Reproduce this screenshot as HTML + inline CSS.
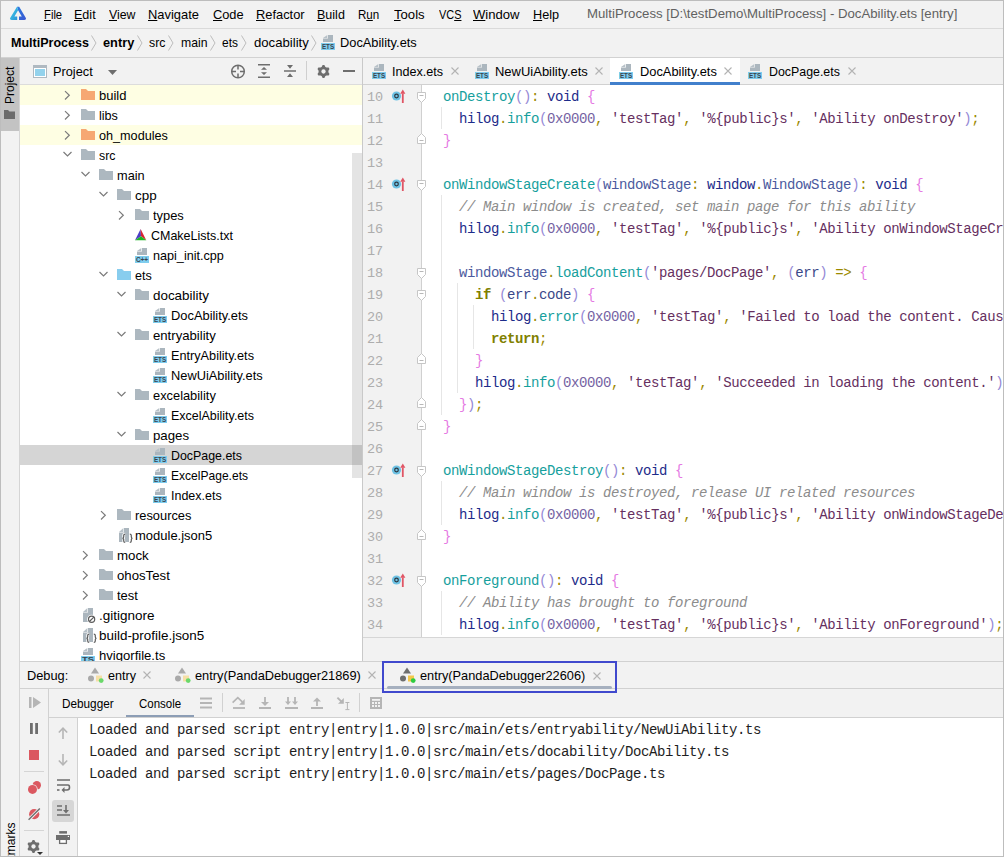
<!DOCTYPE html>
<html><head><meta charset="utf-8"><style>
*{box-sizing:border-box;margin:0;padding:0}
html,body{width:1004px;height:857px;overflow:hidden;background:#f2f2f2}
body{position:relative;font-family:"Liberation Sans",sans-serif;font-size:13px;color:#000}
.a{position:absolute}
.t{position:absolute;white-space:pre;line-height:15px}
.hl{position:absolute;height:1px}
.vl{position:absolute;width:1px}
.ul{text-decoration:underline;text-decoration-thickness:1px;text-underline-offset:1px}
.code{position:absolute;left:21px;white-space:pre;font-family:"Liberation Mono",monospace;font-size:14px;letter-spacing:-0.4px;line-height:22px;color:#1f2d82}
.ln{position:absolute;left:363px;width:20px;text-align:right;white-space:pre;font-family:"Liberation Mono",monospace;font-size:13.5px;letter-spacing:-0.1px;line-height:22px;color:#adadad}
.con{position:absolute;left:89px;white-space:pre;font-family:"Liberation Mono",monospace;font-size:14px;letter-spacing:-0.4px;line-height:22px;color:#1e1e1e}
svg{position:absolute;overflow:visible}
.kw{color:#808000;font-weight:bold}
.fn{color:#16a09d}
.id{color:#1d2c8a}
.pa{color:#968ad6}
.pu{color:#9b8900}
.br{color:#e57ae3}
.nu{color:#7563a3}
.st{color:#66305f}
.cm{color:#8c8c8c;font-style:italic}
.ty{color:#4b5a9e}
.va{color:#3a4889}
</style></head><body>
<svg style="left:9px;top:6px" width="18" height="15" viewBox="0 0 18 15"><defs><linearGradient id="lg1" x1="0" y1="0" x2="1" y2="1"><stop offset="0" stop-color="#3fd2e6"/><stop offset="1" stop-color="#2a8fd8"/></linearGradient><linearGradient id="lg2" x1="0" y1="0" x2="1" y2="1"><stop offset="0" stop-color="#2a7be0"/><stop offset="1" stop-color="#3a56d0"/></linearGradient></defs><path d="M8 0.8H10.2L17 12.2Q17.3 14 15.3 14H10V10.6H12.8L9.1 4.2Z" fill="url(#lg2)"/><path d="M8 0.8L1 12.2Q0.7 14 2.7 14H8.2V10.6H5.4L9.1 4.2Z" fill="url(#lg1)"/></svg>
<div class="t" style="left:43.90px;top:7px;transform:scaleX(0.8648);transform-origin:0 0;"><span class="ul">F</span>ile</div>
<div class="t" style="left:74.00px;top:7px;transform:scaleX(0.9649);transform-origin:0 0;"><span class="ul">E</span>dit</div>
<div class="t" style="left:109.00px;top:7px;transform:scaleX(0.9473);transform-origin:0 0;"><span class="ul">V</span>iew</div>
<div class="t" style="left:148.00px;top:7px;transform:scaleX(0.9932);transform-origin:0 0;"><span class="ul">N</span>avigate</div>
<div class="t" style="left:212.90px;top:7px;transform:scaleX(0.9849);transform-origin:0 0;"><span class="ul">C</span>ode</div>
<div class="t" style="left:256.20px;top:7px;transform:scaleX(0.9890);transform-origin:0 0;"><span class="ul">R</span>efactor</div>
<div class="t" style="left:317.20px;top:7px;transform:scaleX(0.9633);transform-origin:0 0;"><span class="ul">B</span>uild</div>
<div class="t" style="left:358.30px;top:7px;transform:scaleX(0.8911);transform-origin:0 0;">R<span class="ul">u</span>n</div>
<div class="t" style="left:393.70px;top:7px;transform:scaleX(1.0102);transform-origin:0 0;"><span class="ul">T</span>ools</div>
<div class="t" style="left:438.50px;top:7px;transform:scaleX(0.8402);transform-origin:0 0;">VC<span class="ul">S</span></div>
<div class="t" style="left:473.40px;top:7px;transform:scaleX(1.0069);transform-origin:0 0;"><span class="ul">W</span>indow</div>
<div class="t" style="left:532.70px;top:7px;transform:scaleX(0.9746);transform-origin:0 0;"><span class="ul">H</span>elp</div>
<div class="t" style="left:587.00px;top:6px;transform:scaleX(1.0159);transform-origin:0 0;color:#616161">MultiProcess [D:\testDemo\MultiProcess] - DocAbility.ets [entry]</div>
<div class="hl" style="left:0;top:28px;width:1004px;background:#dadada"></div>
<div class="t" style="left:10.50px;top:35px;transform:scaleX(0.9634);transform-origin:0 0;font-weight:bold">MultiProcess</div>
<svg style="left:90.5px;top:35px" width="6" height="16" viewBox="0 0 6 16"><path d="M0.5 0.5L5 8L0.5 15.5" fill="none" stroke="#bdbdbd" stroke-width="1"/></svg>
<div class="t" style="left:103.00px;top:35px;transform:scaleX(0.9827);transform-origin:0 0;font-weight:bold">entry</div>
<svg style="left:137px;top:35px" width="6" height="16" viewBox="0 0 6 16"><path d="M0.5 0.5L5 8L0.5 15.5" fill="none" stroke="#bdbdbd" stroke-width="1"/></svg>
<div class="t" style="left:149.30px;top:35px;transform:scaleX(0.9485);transform-origin:0 0;">src</div>
<svg style="left:167.5px;top:35px" width="6" height="16" viewBox="0 0 6 16"><path d="M0.5 0.5L5 8L0.5 15.5" fill="none" stroke="#bdbdbd" stroke-width="1"/></svg>
<div class="t" style="left:180.50px;top:35px;transform:scaleX(0.9394);transform-origin:0 0;">main</div>
<svg style="left:209.5px;top:35px" width="6" height="16" viewBox="0 0 6 16"><path d="M0.5 0.5L5 8L0.5 15.5" fill="none" stroke="#bdbdbd" stroke-width="1"/></svg>
<div class="t" style="left:222.30px;top:35px;transform:scaleX(0.9196);transform-origin:0 0;">ets</div>
<svg style="left:241px;top:35px" width="6" height="16" viewBox="0 0 6 16"><path d="M0.5 0.5L5 8L0.5 15.5" fill="none" stroke="#bdbdbd" stroke-width="1"/></svg>
<div class="t" style="left:253.70px;top:35px;transform:scaleX(1.0109);transform-origin:0 0;">docability</div>
<svg style="left:310.5px;top:35px" width="6" height="16" viewBox="0 0 6 16"><path d="M0.5 0.5L5 8L0.5 15.5" fill="none" stroke="#bdbdbd" stroke-width="1"/></svg>
<svg style="left:321px;top:35px" width="14" height="15" viewBox="0 0 14 15"><path d="M7 0H12V7H2V3.6H7Z" fill="#abb6be"/><path d="M2 3L6.3 3V0Z" fill="#b7c1c8"/><rect x="0" y="8" width="14" height="7" fill="#7fcdee"/><text x="7" y="14.2" text-anchor="middle" font-family="Liberation Sans" font-weight="bold" font-size="7" textLength="12.2" lengthAdjust="spacingAndGlyphs" fill="#39444e">ETS</text></svg>
<div class="t" style="left:339.60px;top:35px;transform:scaleX(0.9866);transform-origin:0 0;">DocAbility.ets</div>
<div class="hl" style="left:0;top:57px;width:1004px;background:#d2d2d2"></div>
<div class="a" style="left:1px;top:58px;width:18px;height:73px;background:#c3c3c3"></div>
<div class="vl" style="left:19px;top:58px;height:798px;background:#d5d5d5"></div>
<div class="t" style="left:-8px;top:78px;width:37px;transform:rotate(-90deg);font-size:12px;text-align:center">Project</div>
<svg style="left:4px;top:110px" width="11" height="9" viewBox="0 0 11 9"><path d="M0 0H4L5.5 1.5H11V9H0Z" fill="#6b6b6b"/></svg>
<div class="t" style="left:-13px;top:839px;width:48px;transform:rotate(-90deg);font-size:12px;text-align:right">kmarks</div>
<div class="hl" style="left:20px;top:84px;width:342px;background:#dcdcdc"></div>
<svg style="left:33px;top:65px" width="14" height="13" viewBox="0 0 14 13"><rect x="0" y="0" width="14" height="13" fill="#afb9c1"/><rect x="1" y="3" width="12" height="9" fill="#fff"/><rect x="2" y="4" width="10" height="7" fill="#93d2ec"/></svg>
<div class="t" style="left:52.50px;top:64px;transform:scaleX(0.9819);transform-origin:0 0;">Project</div>
<svg style="left:108px;top:70px" width="9" height="5" viewBox="0 0 9 5"><path d="M0 0H9L4.5 5Z" fill="#6e6e6e"/></svg>
<svg style="left:230px;top:64px" width="16" height="15" viewBox="0 0 16 15"><circle cx="8" cy="7.5" r="6.3" fill="none" stroke="#6e6e6e" stroke-width="1.5"/><path d="M8 1.5V5.5M8 9.5V13.5M2 7.5H6M10 7.5H14" stroke="#6e6e6e" stroke-width="1.5"/></svg>
<svg style="left:258px;top:64px" width="12" height="14" viewBox="0 0 12 14"><path d="M0 0.8H12M0 13.2H12" stroke="#6e6e6e" stroke-width="1.5"/><path d="M6 3L9 5.8H3Z M6 11L9 8.2H3Z" fill="#6e6e6e"/></svg>
<svg style="left:284px;top:64px" width="12" height="14" viewBox="0 0 12 14"><path d="M0 7H12" stroke="#6e6e6e" stroke-width="1.5"/><path d="M6 4.8L9 1H3Z M6 9.2L9 13H3Z" fill="#6e6e6e"/></svg>
<div class="vl" style="left:306px;top:61px;height:19px;background:#cfcfcf"></div>
<svg style="left:316.5px;top:64.5px" width="13" height="13" viewBox="0 0 13 13"><path d="M5.65 0.06L7.35 0.06L8.39 1.94L9.51 2.58L11.66 2.54L12.51 4.01L11.40 5.86L11.40 7.14L12.51 8.99L11.66 10.46L9.51 10.42L8.39 11.06L7.35 12.94L5.65 12.94L4.61 11.06L3.49 10.42L1.34 10.46L0.49 8.99L1.60 7.14L1.60 5.86L0.49 4.01L1.34 2.54L3.49 2.58L4.61 1.94Z" fill="#6e6e6e"/><circle cx="6.5" cy="6.5" r="2.15" fill="#f2f2f2"/></svg>
<div class="hl" style="left:343px;top:70px;width:12px;height:1.6px;background:#6e6e6e"></div>
<div class="a" style="left:20px;top:85px;width:342px;height:576px;background:#fff;overflow:hidden">
</div>
<div class="a" style="left:20px;top:85px;width:342px;height:576px;overflow:hidden">
<div class="a" style="left:0;top:0px;width:342px;height:20px;background:#fefee3"></div>
<div class="a" style="left:0;top:40px;width:342px;height:20px;background:#fefee3"></div>
<div class="a" style="left:0;top:360px;width:342px;height:20px;background:#d5d5d5"></div>
</div>
<div class="a" style="left:352px;top:153px;width:10px;height:325px;background:rgba(113,113,113,0.19)"></div>
<svg style="left:63px;top:85px" width="8" height="20" viewBox="0 0 8 20"><path d="M2 6.1L6.3 10.3L2 14.5" fill="none" stroke="#7b7b7b" stroke-width="1.2"/></svg>
<svg style="left:81px;top:89px" width="14" height="11" viewBox="0 0 14 11"><path d="M0 0H5L7 2H14V11H0Z" fill="#f6a873"/></svg>
<div class="t" style="left:98.80px;top:88px;transform:scaleX(0.9989);transform-origin:0 0;">build</div>
<svg style="left:63px;top:105px" width="8" height="20" viewBox="0 0 8 20"><path d="M2 6.1L6.3 10.3L2 14.5" fill="none" stroke="#7b7b7b" stroke-width="1.2"/></svg>
<svg style="left:81px;top:109px" width="14" height="11" viewBox="0 0 14 11"><path d="M0 0H5L7 2H14V11H0Z" fill="#adb8c0"/></svg>
<div class="t" style="left:98.80px;top:108px;transform:scaleX(0.9692);transform-origin:0 0;">libs</div>
<svg style="left:63px;top:125px" width="8" height="20" viewBox="0 0 8 20"><path d="M2 6.1L6.3 10.3L2 14.5" fill="none" stroke="#7b7b7b" stroke-width="1.2"/></svg>
<svg style="left:81px;top:129px" width="14" height="11" viewBox="0 0 14 11"><path d="M0 0H5L7 2H14V11H0Z" fill="#f6a873"/></svg>
<div class="t" style="left:98.80px;top:128px;transform:scaleX(0.9725);transform-origin:0 0;">oh_modules</div>
<svg style="left:62px;top:145px" width="10" height="20" viewBox="0 0 10 20"><path d="M1.5 7L5.5 11L9.5 7" fill="none" stroke="#7b7b7b" stroke-width="1.2"/></svg>
<svg style="left:81px;top:149px" width="14" height="11" viewBox="0 0 14 11"><path d="M0 0H5L7 2H14V11H0Z" fill="#adb8c0"/></svg>
<div class="t" style="left:98.80px;top:148px;transform:scaleX(0.9485);transform-origin:0 0;">src</div>
<svg style="left:80px;top:165px" width="10" height="20" viewBox="0 0 10 20"><path d="M1.5 7L5.5 11L9.5 7" fill="none" stroke="#7b7b7b" stroke-width="1.2"/></svg>
<svg style="left:99px;top:169px" width="14" height="11" viewBox="0 0 14 11"><path d="M0 0H5L7 2H14V11H0Z" fill="#adb8c0"/></svg>
<div class="t" style="left:116.80px;top:168px;transform:scaleX(0.9819);transform-origin:0 0;">main</div>
<svg style="left:98px;top:185px" width="10" height="20" viewBox="0 0 10 20"><path d="M1.5 7L5.5 11L9.5 7" fill="none" stroke="#7b7b7b" stroke-width="1.2"/></svg>
<svg style="left:117px;top:189px" width="14" height="11" viewBox="0 0 14 11"><path d="M0 0H5L7 2H14V11H0Z" fill="#adb8c0"/></svg>
<div class="t" style="left:134.80px;top:188px;transform:scaleX(1.0320);transform-origin:0 0;">cpp</div>
<svg style="left:117px;top:205px" width="8" height="20" viewBox="0 0 8 20"><path d="M2 6.1L6.3 10.3L2 14.5" fill="none" stroke="#7b7b7b" stroke-width="1.2"/></svg>
<svg style="left:135px;top:209px" width="14" height="11" viewBox="0 0 14 11"><path d="M0 0H5L7 2H14V11H0Z" fill="#adb8c0"/></svg>
<div class="t" style="left:152.80px;top:208px;transform:scaleX(0.9913);transform-origin:0 0;">types</div>
<svg style="left:135px;top:229px" width="12" height="12" viewBox="0 0 12 12"><path d="M5.6 0L6 7.2L0 11.3Z" fill="#4d3ec4"/><path d="M5.6 0L11.3 11.3L6 7.2Z" fill="#d92333"/><path d="M0 11.3L6 7.2L11.3 11.3Z" fill="#1eb624"/></svg>
<div class="t" style="left:150.50px;top:228px;transform:scaleX(0.9604);transform-origin:0 0;">CMakeLists.txt</div>
<svg style="left:135px;top:248px" width="14" height="15" viewBox="0 0 14 15"><path d="M7 0H12V7H2V3.6H7Z" fill="#abb6be"/><path d="M2 3L6.3 3V0Z" fill="#b7c1c8"/><rect x="0" y="8" width="14" height="7" fill="#7fcdee"/><text x="7" y="14.2" text-anchor="middle" font-family="Liberation Sans" font-weight="bold" font-size="7" textLength="12.2" lengthAdjust="spacingAndGlyphs" fill="#39444e">C++</text></svg>
<div class="t" style="left:152.80px;top:248px;transform:scaleX(0.9708);transform-origin:0 0;">napi_init.cpp</div>
<svg style="left:98px;top:265px" width="10" height="20" viewBox="0 0 10 20"><path d="M1.5 7L5.5 11L9.5 7" fill="none" stroke="#7b7b7b" stroke-width="1.2"/></svg>
<svg style="left:117px;top:269px" width="14" height="11" viewBox="0 0 14 11"><path d="M0 0H5L7 2H14V11H0Z" fill="#88cdee"/></svg>
<div class="t" style="left:134.80px;top:268px;transform:scaleX(0.9659);transform-origin:0 0;">ets</div>
<svg style="left:116px;top:285px" width="10" height="20" viewBox="0 0 10 20"><path d="M1.5 7L5.5 11L9.5 7" fill="none" stroke="#7b7b7b" stroke-width="1.2"/></svg>
<svg style="left:135px;top:289px" width="14" height="11" viewBox="0 0 14 11"><path d="M0 0H5L7 2H14V11H0Z" fill="#adb8c0"/></svg>
<div class="t" style="left:152.80px;top:288px;transform:scaleX(1.0312);transform-origin:0 0;">docability</div>
<svg style="left:153px;top:308px" width="14" height="15" viewBox="0 0 14 15"><path d="M7 0H12V7H2V3.6H7Z" fill="#abb6be"/><path d="M2 3L6.3 3V0Z" fill="#b7c1c8"/><rect x="0" y="8" width="14" height="7" fill="#7fcdee"/><text x="7" y="14.2" text-anchor="middle" font-family="Liberation Sans" font-weight="bold" font-size="7" textLength="12.2" lengthAdjust="spacingAndGlyphs" fill="#39444e">ETS</text></svg>
<div class="t" style="left:170.80px;top:308px;transform:scaleX(0.9905);transform-origin:0 0;">DocAbility.ets</div>
<svg style="left:116px;top:325px" width="10" height="20" viewBox="0 0 10 20"><path d="M1.5 7L5.5 11L9.5 7" fill="none" stroke="#7b7b7b" stroke-width="1.2"/></svg>
<svg style="left:135px;top:329px" width="14" height="11" viewBox="0 0 14 11"><path d="M0 0H5L7 2H14V11H0Z" fill="#adb8c0"/></svg>
<div class="t" style="left:152.80px;top:328px;transform:scaleX(1.0106);transform-origin:0 0;">entryability</div>
<svg style="left:153px;top:348px" width="14" height="15" viewBox="0 0 14 15"><path d="M7 0H12V7H2V3.6H7Z" fill="#abb6be"/><path d="M2 3L6.3 3V0Z" fill="#b7c1c8"/><rect x="0" y="8" width="14" height="7" fill="#7fcdee"/><text x="7" y="14.2" text-anchor="middle" font-family="Liberation Sans" font-weight="bold" font-size="7" textLength="12.2" lengthAdjust="spacingAndGlyphs" fill="#39444e">ETS</text></svg>
<div class="t" style="left:170.80px;top:348px;transform:scaleX(0.9762);transform-origin:0 0;">EntryAbility.ets</div>
<svg style="left:153px;top:368px" width="14" height="15" viewBox="0 0 14 15"><path d="M7 0H12V7H2V3.6H7Z" fill="#abb6be"/><path d="M2 3L6.3 3V0Z" fill="#b7c1c8"/><rect x="0" y="8" width="14" height="7" fill="#7fcdee"/><text x="7" y="14.2" text-anchor="middle" font-family="Liberation Sans" font-weight="bold" font-size="7" textLength="12.2" lengthAdjust="spacingAndGlyphs" fill="#39444e">ETS</text></svg>
<div class="t" style="left:170.80px;top:368px;transform:scaleX(0.9866);transform-origin:0 0;">NewUiAbility.ets</div>
<svg style="left:116px;top:385px" width="10" height="20" viewBox="0 0 10 20"><path d="M1.5 7L5.5 11L9.5 7" fill="none" stroke="#7b7b7b" stroke-width="1.2"/></svg>
<svg style="left:135px;top:389px" width="14" height="11" viewBox="0 0 14 11"><path d="M0 0H5L7 2H14V11H0Z" fill="#adb8c0"/></svg>
<div class="t" style="left:152.80px;top:388px;transform:scaleX(0.9879);transform-origin:0 0;">excelability</div>
<svg style="left:153px;top:408px" width="14" height="15" viewBox="0 0 14 15"><path d="M7 0H12V7H2V3.6H7Z" fill="#abb6be"/><path d="M2 3L6.3 3V0Z" fill="#b7c1c8"/><rect x="0" y="8" width="14" height="7" fill="#7fcdee"/><text x="7" y="14.2" text-anchor="middle" font-family="Liberation Sans" font-weight="bold" font-size="7" textLength="12.2" lengthAdjust="spacingAndGlyphs" fill="#39444e">ETS</text></svg>
<div class="t" style="left:170.80px;top:408px;transform:scaleX(0.9601);transform-origin:0 0;">ExcelAbility.ets</div>
<svg style="left:116px;top:425px" width="10" height="20" viewBox="0 0 10 20"><path d="M1.5 7L5.5 11L9.5 7" fill="none" stroke="#7b7b7b" stroke-width="1.2"/></svg>
<svg style="left:135px;top:429px" width="14" height="11" viewBox="0 0 14 11"><path d="M0 0H5L7 2H14V11H0Z" fill="#adb8c0"/></svg>
<div class="t" style="left:152.80px;top:428px;transform:scaleX(1.0181);transform-origin:0 0;">pages</div>
<svg style="left:153px;top:448px" width="14" height="15" viewBox="0 0 14 15"><path d="M7 0H12V7H2V3.6H7Z" fill="#abb6be"/><path d="M2 3L6.3 3V0Z" fill="#b7c1c8"/><rect x="0" y="8" width="14" height="7" fill="#7fcdee"/><text x="7" y="14.2" text-anchor="middle" font-family="Liberation Sans" font-weight="bold" font-size="7" textLength="12.2" lengthAdjust="spacingAndGlyphs" fill="#39444e">ETS</text></svg>
<div class="t" style="left:170.80px;top:448px;transform:scaleX(0.9531);transform-origin:0 0;">DocPage.ets</div>
<svg style="left:153px;top:468px" width="14" height="15" viewBox="0 0 14 15"><path d="M7 0H12V7H2V3.6H7Z" fill="#abb6be"/><path d="M2 3L6.3 3V0Z" fill="#b7c1c8"/><rect x="0" y="8" width="14" height="7" fill="#7fcdee"/><text x="7" y="14.2" text-anchor="middle" font-family="Liberation Sans" font-weight="bold" font-size="7" textLength="12.2" lengthAdjust="spacingAndGlyphs" fill="#39444e">ETS</text></svg>
<div class="t" style="left:170.80px;top:468px;transform:scaleX(0.9269);transform-origin:0 0;">ExcelPage.ets</div>
<svg style="left:153px;top:488px" width="14" height="15" viewBox="0 0 14 15"><path d="M7 0H12V7H2V3.6H7Z" fill="#abb6be"/><path d="M2 3L6.3 3V0Z" fill="#b7c1c8"/><rect x="0" y="8" width="14" height="7" fill="#7fcdee"/><text x="7" y="14.2" text-anchor="middle" font-family="Liberation Sans" font-weight="bold" font-size="7" textLength="12.2" lengthAdjust="spacingAndGlyphs" fill="#39444e">ETS</text></svg>
<div class="t" style="left:170.80px;top:488px;transform:scaleX(0.9606);transform-origin:0 0;">Index.ets</div>
<svg style="left:99px;top:505px" width="8" height="20" viewBox="0 0 8 20"><path d="M2 6.1L6.3 10.3L2 14.5" fill="none" stroke="#7b7b7b" stroke-width="1.2"/></svg>
<svg style="left:117px;top:509px" width="14" height="11" viewBox="0 0 14 11"><path d="M0 0H5L7 2H14V11H0Z" fill="#adb8c0"/></svg>
<div class="t" style="left:134.80px;top:508px;transform:scaleX(0.9883);transform-origin:0 0;">resources</div>
<svg style="left:119px;top:528px" width="16" height="16" viewBox="0 0 16 16"><path d="M5 0H10V14H0V4.6H5Z" fill="#abb6be"/><path d="M0 4L4.4 4V0Z" fill="#b7c1c8"/><path d="M6.2 6.1Q4.7 6.1 4.7 7.5V9.1Q4.7 10.3 3.5 10.3Q4.7 10.3 4.7 11.5V13.1Q4.7 14.5 6.2 14.5M10.8 6.1Q12.3 6.1 12.3 7.5V9.1Q12.3 10.3 13.5 10.3Q12.3 10.3 12.3 11.5V13.1Q12.3 14.5 10.8 14.5" fill="none" stroke="#fff" stroke-width="2.8"/><path d="M6.2 6.1Q4.7 6.1 4.7 7.5V9.1Q4.7 10.3 3.5 10.3Q4.7 10.3 4.7 11.5V13.1Q4.7 14.5 6.2 14.5M10.8 6.1Q12.3 6.1 12.3 7.5V9.1Q12.3 10.3 13.5 10.3Q12.3 10.3 12.3 11.5V13.1Q12.3 14.5 10.8 14.5" fill="none" stroke="#5b5b5b" stroke-width="1.2"/></svg>
<div class="t" style="left:134.80px;top:528px;transform:scaleX(0.9994);transform-origin:0 0;">module.json5</div>
<svg style="left:81px;top:545px" width="8" height="20" viewBox="0 0 8 20"><path d="M2 6.1L6.3 10.3L2 14.5" fill="none" stroke="#7b7b7b" stroke-width="1.2"/></svg>
<svg style="left:99px;top:549px" width="14" height="11" viewBox="0 0 14 11"><path d="M0 0H5L7 2H14V11H0Z" fill="#adb8c0"/></svg>
<div class="t" style="left:116.80px;top:548px;transform:scaleX(1.0224);transform-origin:0 0;">mock</div>
<svg style="left:81px;top:565px" width="8" height="20" viewBox="0 0 8 20"><path d="M2 6.1L6.3 10.3L2 14.5" fill="none" stroke="#7b7b7b" stroke-width="1.2"/></svg>
<svg style="left:99px;top:569px" width="14" height="11" viewBox="0 0 14 11"><path d="M0 0H5L7 2H14V11H0Z" fill="#adb8c0"/></svg>
<div class="t" style="left:116.80px;top:568px;transform:scaleX(1.0154);transform-origin:0 0;">ohosTest</div>
<svg style="left:81px;top:585px" width="8" height="20" viewBox="0 0 8 20"><path d="M2 6.1L6.3 10.3L2 14.5" fill="none" stroke="#7b7b7b" stroke-width="1.2"/></svg>
<svg style="left:99px;top:589px" width="14" height="11" viewBox="0 0 14 11"><path d="M0 0H5L7 2H14V11H0Z" fill="#adb8c0"/></svg>
<div class="t" style="left:116.80px;top:588px;transform:scaleX(0.9938);transform-origin:0 0;">test</div>
<svg style="left:83px;top:608px" width="16" height="16" viewBox="0 0 16 16"><path d="M5 0H10V14H0V4.6H5Z" fill="#abb6be"/><path d="M0 4L4.4 4V0Z" fill="#b7c1c8"/><circle cx="8.6" cy="11.3" r="4.5" fill="#fff"/><circle cx="8.6" cy="11.3" r="3.1" fill="none" stroke="#5b5b5b" stroke-width="1.2"/><path d="M6.4 13.5L10.8 9.1" stroke="#5b5b5b" stroke-width="1.2"/></svg>
<div class="t" style="left:98.80px;top:608px;transform:scaleX(1.0369);transform-origin:0 0;">.gitignore</div>
<svg style="left:83px;top:628px" width="16" height="16" viewBox="0 0 16 16"><path d="M5 0H10V14H0V4.6H5Z" fill="#abb6be"/><path d="M0 4L4.4 4V0Z" fill="#b7c1c8"/><path d="M6.2 6.1Q4.7 6.1 4.7 7.5V9.1Q4.7 10.3 3.5 10.3Q4.7 10.3 4.7 11.5V13.1Q4.7 14.5 6.2 14.5M10.8 6.1Q12.3 6.1 12.3 7.5V9.1Q12.3 10.3 13.5 10.3Q12.3 10.3 12.3 11.5V13.1Q12.3 14.5 10.8 14.5" fill="none" stroke="#fff" stroke-width="2.8"/><path d="M6.2 6.1Q4.7 6.1 4.7 7.5V9.1Q4.7 10.3 3.5 10.3Q4.7 10.3 4.7 11.5V13.1Q4.7 14.5 6.2 14.5M10.8 6.1Q12.3 6.1 12.3 7.5V9.1Q12.3 10.3 13.5 10.3Q12.3 10.3 12.3 11.5V13.1Q12.3 14.5 10.8 14.5" fill="none" stroke="#5b5b5b" stroke-width="1.2"/></svg>
<div class="t" style="left:98.80px;top:628px;transform:scaleX(1.0332);transform-origin:0 0;">build-profile.json5</div>
<svg style="left:81px;top:648px" width="14" height="15" viewBox="0 0 14 15"><path d="M7 0H12V7H2V3.6H7Z" fill="#abb6be"/><path d="M2 3L6.3 3V0Z" fill="#b7c1c8"/><rect x="0" y="8" width="14" height="7" fill="#7fcdee"/><text x="7" y="14.2" text-anchor="middle" font-family="Liberation Sans" font-weight="bold" font-size="7" textLength="12.2" lengthAdjust="spacingAndGlyphs" fill="#39444e">TS</text></svg>
<div class="t" style="left:98.80px;top:648px;transform:scaleX(1.0064);transform-origin:0 0;">hvigorfile.ts</div>
<div class="vl" style="left:362px;top:58px;height:603px;background:#c9c9c9"></div>
<div class="a" style="left:610px;top:58px;width:130px;height:26px;background:#fff"></div>
<div class="a" style="left:610px;top:82px;width:130px;height:3px;background:#4180cc"></div>
<div class="hl" style="left:363px;top:84px;width:247px;background:#d1d1d1"></div>
<div class="hl" style="left:740px;top:84px;width:263px;background:#d1d1d1"></div>
<svg style="left:372px;top:64px" width="14" height="15" viewBox="0 0 14 15"><path d="M7 0H12V7H2V3.6H7Z" fill="#abb6be"/><path d="M2 3L6.3 3V0Z" fill="#b7c1c8"/><rect x="0" y="8" width="14" height="7" fill="#7fcdee"/><text x="7" y="14.2" text-anchor="middle" font-family="Liberation Sans" font-weight="bold" font-size="7" textLength="12.2" lengthAdjust="spacingAndGlyphs" fill="#39444e">ETS</text></svg>
<div class="t" style="left:392.40px;top:64px;transform:scaleX(0.9682);transform-origin:0 0;">Index.ets</div>
<svg style="left:451px;top:67px" width="8" height="8" viewBox="0 0 8 8"><path d="M0.5 0.5L7.5 7.5M7.5 0.5L0.5 7.5" stroke="#b3b3b3" stroke-width="1.1"/></svg>
<svg style="left:475px;top:64px" width="14" height="15" viewBox="0 0 14 15"><path d="M7 0H12V7H2V3.6H7Z" fill="#abb6be"/><path d="M2 3L6.3 3V0Z" fill="#b7c1c8"/><rect x="0" y="8" width="14" height="7" fill="#7fcdee"/><text x="7" y="14.2" text-anchor="middle" font-family="Liberation Sans" font-weight="bold" font-size="7" textLength="12.2" lengthAdjust="spacingAndGlyphs" fill="#39444e">ETS</text></svg>
<div class="t" style="left:495.00px;top:64px;transform:scaleX(0.9984);transform-origin:0 0;">NewUiAbility.ets</div>
<svg style="left:595px;top:67px" width="8" height="8" viewBox="0 0 8 8"><path d="M0.5 0.5L7.5 7.5M7.5 0.5L0.5 7.5" stroke="#b3b3b3" stroke-width="1.1"/></svg>
<svg style="left:619px;top:64px" width="14" height="15" viewBox="0 0 14 15"><path d="M7 0H12V7H2V3.6H7Z" fill="#abb6be"/><path d="M2 3L6.3 3V0Z" fill="#b7c1c8"/><rect x="0" y="8" width="14" height="7" fill="#7fcdee"/><text x="7" y="14.2" text-anchor="middle" font-family="Liberation Sans" font-weight="bold" font-size="7" textLength="12.2" lengthAdjust="spacingAndGlyphs" fill="#39444e">ETS</text></svg>
<div class="t" style="left:639.70px;top:64px;transform:scaleX(0.9879);transform-origin:0 0;">DocAbility.ets</div>
<svg style="left:724px;top:67px" width="8" height="8" viewBox="0 0 8 8"><path d="M0.5 0.5L7.5 7.5M7.5 0.5L0.5 7.5" stroke="#b3b3b3" stroke-width="1.1"/></svg>
<svg style="left:748px;top:64px" width="14" height="15" viewBox="0 0 14 15"><path d="M7 0H12V7H2V3.6H7Z" fill="#abb6be"/><path d="M2 3L6.3 3V0Z" fill="#b7c1c8"/><rect x="0" y="8" width="14" height="7" fill="#7fcdee"/><text x="7" y="14.2" text-anchor="middle" font-family="Liberation Sans" font-weight="bold" font-size="7" textLength="12.2" lengthAdjust="spacingAndGlyphs" fill="#39444e">ETS</text></svg>
<div class="t" style="left:768.60px;top:64px;transform:scaleX(0.9518);transform-origin:0 0;">DocPage.ets</div>
<svg style="left:847.5px;top:67px" width="8" height="8" viewBox="0 0 8 8"><path d="M0.5 0.5L7.5 7.5M7.5 0.5L0.5 7.5" stroke="#b3b3b3" stroke-width="1.1"/></svg>
<div class="a" style="left:363px;top:85px;width:58px;height:552px;background:#f2f2f2"></div>
<div class="vl" style="left:421px;top:85px;height:552px;background:#d0d0d0"></div>
<div class="a" style="left:422px;top:85px;width:581px;height:552px;background:#fff;overflow:hidden">
<div class="vl" style="left:19px;top:22px;height:22px;background:#e6e6e6"></div>
<div class="vl" style="left:19px;top:110px;height:220px;background:#e6e6e6"></div>
<div class="vl" style="left:35px;top:198px;height:110px;background:#e6e6e6"></div>
<div class="vl" style="left:51px;top:220px;height:44px;background:#e6e6e6"></div>
<div class="vl" style="left:19px;top:396px;height:44px;background:#e6e6e6"></div>
<div class="vl" style="left:19px;top:506px;height:44px;background:#e6e6e6"></div>
<div class="code" style="top:1px"><span class="fn">onDestroy</span><span class="pa">()</span><span class="pu">: </span><span class="id">void </span><span class="br">{</span></div>
<div class="code" style="top:23px">  <span class="id">hilog</span><span class="pu">.</span><span class="fn">info</span><span class="pa">(</span><span class="nu">0x0000</span><span class="pu">, </span><span class="st">&#x27;testTag&#x27;</span><span class="pu">, </span><span class="st">&#x27;%{public}s&#x27;</span><span class="pu">, </span><span class="st">&#x27;Ability onDestroy&#x27;</span><span class="pa">)</span><span class="pu">;</span></div>
<div class="code" style="top:45px"><span class="br">}</span></div>
<div class="code" style="top:89px"><span class="fn">onWindowStageCreate</span><span class="pa">(</span><span class="ty">windowStage</span><span class="pu">: </span><span class="id">window</span><span class="pu">.</span><span class="ty">WindowStage</span><span class="pa">)</span><span class="pu">: </span><span class="id">void </span><span class="br">{</span></div>
<div class="code" style="top:111px">  <span class="cm">// Main window is created, set main page for this ability</span></div>
<div class="code" style="top:133px">  <span class="id">hilog</span><span class="pu">.</span><span class="fn">info</span><span class="pa">(</span><span class="nu">0x0000</span><span class="pu">, </span><span class="st">&#x27;testTag&#x27;</span><span class="pu">, </span><span class="st">&#x27;%{public}s&#x27;</span><span class="pu">, </span><span class="st">&#x27;Ability onWindowStageCreate&#x27;</span><span class="pa">)</span><span class="pu">;</span></div>
<div class="code" style="top:177px">  <span class="ty">windowStage</span><span class="pu">.</span><span class="fn">loadContent</span><span class="pa">(</span><span class="st">&#x27;pages/DocPage&#x27;</span><span class="pu">, </span><span class="pa">(</span><span class="va">err</span><span class="pa">)</span><span class="pu"> =&gt; </span><span class="br">{</span></div>
<div class="code" style="top:199px">    <span class="kw">if </span><span class="pa">(</span><span class="va">err</span><span class="pu">.</span><span class="va">code</span><span class="pa">) </span><span class="br">{</span></div>
<div class="code" style="top:221px">      <span class="id">hilog</span><span class="pu">.</span><span class="fn">error</span><span class="pa">(</span><span class="nu">0x0000</span><span class="pu">, </span><span class="st">&#x27;testTag&#x27;</span><span class="pu">, </span><span class="st">&#x27;Failed to load the content. Cause: %{public}s&#x27;</span></div>
<div class="code" style="top:243px">      <span class="kw">return</span><span class="pu">;</span></div>
<div class="code" style="top:265px">    <span class="br">}</span></div>
<div class="code" style="top:287px">    <span class="id">hilog</span><span class="pu">.</span><span class="fn">info</span><span class="pa">(</span><span class="nu">0x0000</span><span class="pu">, </span><span class="st">&#x27;testTag&#x27;</span><span class="pu">, </span><span class="st">&#x27;Succeeded in loading the content.&#x27;</span><span class="pa">)</span><span class="pu">;</span></div>
<div class="code" style="top:309px">  <span class="br">}</span><span class="pa">)</span><span class="pu">;</span></div>
<div class="code" style="top:331px"><span class="br">}</span></div>
<div class="code" style="top:375px"><span class="fn">onWindowStageDestroy</span><span class="pa">()</span><span class="pu">: </span><span class="id">void </span><span class="br">{</span></div>
<div class="code" style="top:397px">  <span class="cm">// Main window is destroyed, release UI related resources</span></div>
<div class="code" style="top:419px">  <span class="id">hilog</span><span class="pu">.</span><span class="fn">info</span><span class="pa">(</span><span class="nu">0x0000</span><span class="pu">, </span><span class="st">&#x27;testTag&#x27;</span><span class="pu">, </span><span class="st">&#x27;%{public}s&#x27;</span><span class="pu">, </span><span class="st">&#x27;Ability onWindowStageDestroy&#x27;</span><span class="pa">)</span><span class="pu">;</span></div>
<div class="code" style="top:441px"><span class="br">}</span></div>
<div class="code" style="top:485px"><span class="fn">onForeground</span><span class="pa">()</span><span class="pu">: </span><span class="id">void </span><span class="br">{</span></div>
<div class="code" style="top:507px">  <span class="cm">// Ability has brought to foreground</span></div>
<div class="code" style="top:529px">  <span class="id">hilog</span><span class="pu">.</span><span class="fn">info</span><span class="pa">(</span><span class="nu">0x0000</span><span class="pu">, </span><span class="st">&#x27;testTag&#x27;</span><span class="pu">, </span><span class="st">&#x27;%{public}s&#x27;</span><span class="pu">, </span><span class="st">&#x27;Ability onForeground&#x27;</span><span class="pa">)</span><span class="pu">;</span></div>
</div>
<div class="ln" style="top:87px">10</div>
<div class="ln" style="top:109px">11</div>
<div class="ln" style="top:131px">12</div>
<div class="ln" style="top:153px">13</div>
<div class="ln" style="top:175px">14</div>
<div class="ln" style="top:197px">15</div>
<div class="ln" style="top:219px">16</div>
<div class="ln" style="top:241px">17</div>
<div class="ln" style="top:263px">18</div>
<div class="ln" style="top:285px">19</div>
<div class="ln" style="top:307px">20</div>
<div class="ln" style="top:329px">21</div>
<div class="ln" style="top:351px">22</div>
<div class="ln" style="top:373px">23</div>
<div class="ln" style="top:395px">24</div>
<div class="ln" style="top:417px">25</div>
<div class="ln" style="top:439px">26</div>
<div class="ln" style="top:461px">27</div>
<div class="ln" style="top:483px">28</div>
<div class="ln" style="top:505px">29</div>
<div class="ln" style="top:527px">30</div>
<div class="ln" style="top:549px">31</div>
<div class="ln" style="top:571px">32</div>
<div class="ln" style="top:593px">33</div>
<div class="ln" style="top:615px">34</div>
<svg style="left:391px;top:89px" width="16" height="15" viewBox="0 0 16 15"><circle cx="5.5" cy="7" r="4.6" fill="#6ec2e4"/><circle cx="5.5" cy="7" r="1.8" fill="none" stroke="#2c3640" stroke-width="1.2"/><path d="M11.8 4.5V14" stroke="#e05565" stroke-width="1.8"/><path d="M9.2 4.8L11.8 0.5L14.4 4.8Z" fill="#e05565"/></svg>
<svg style="left:391px;top:177px" width="16" height="15" viewBox="0 0 16 15"><circle cx="5.5" cy="7" r="4.6" fill="#6ec2e4"/><circle cx="5.5" cy="7" r="1.8" fill="none" stroke="#2c3640" stroke-width="1.2"/><path d="M11.8 4.5V14" stroke="#e05565" stroke-width="1.8"/><path d="M9.2 4.8L11.8 0.5L14.4 4.8Z" fill="#e05565"/></svg>
<svg style="left:391px;top:463px" width="16" height="15" viewBox="0 0 16 15"><circle cx="5.5" cy="7" r="4.6" fill="#6ec2e4"/><circle cx="5.5" cy="7" r="1.8" fill="none" stroke="#2c3640" stroke-width="1.2"/><path d="M11.8 4.5V14" stroke="#e05565" stroke-width="1.8"/><path d="M9.2 4.8L11.8 0.5L14.4 4.8Z" fill="#e05565"/></svg>
<svg style="left:391px;top:573px" width="16" height="15" viewBox="0 0 16 15"><circle cx="5.5" cy="7" r="4.6" fill="#6ec2e4"/><circle cx="5.5" cy="7" r="1.8" fill="none" stroke="#2c3640" stroke-width="1.2"/><path d="M11.8 4.5V14" stroke="#e05565" stroke-width="1.8"/><path d="M9.2 4.8L11.8 0.5L14.4 4.8Z" fill="#e05565"/></svg>
<svg style="left:417px;top:92px" width="9" height="11" viewBox="0 0 9 11"><path d="M0.5 0.5H8.5V6.5L4.5 10.5L0.5 6.5Z" fill="#fff" stroke="#c6c6c6"/><path d="M2.5 3.5H6.5" stroke="#b8b8b8"/></svg>
<svg style="left:417px;top:180px" width="9" height="11" viewBox="0 0 9 11"><path d="M0.5 0.5H8.5V6.5L4.5 10.5L0.5 6.5Z" fill="#fff" stroke="#c6c6c6"/><path d="M2.5 3.5H6.5" stroke="#b8b8b8"/></svg>
<svg style="left:417px;top:268px" width="9" height="11" viewBox="0 0 9 11"><path d="M0.5 0.5H8.5V6.5L4.5 10.5L0.5 6.5Z" fill="#fff" stroke="#c6c6c6"/><path d="M2.5 3.5H6.5" stroke="#b8b8b8"/></svg>
<svg style="left:417px;top:290px" width="9" height="11" viewBox="0 0 9 11"><path d="M0.5 0.5H8.5V6.5L4.5 10.5L0.5 6.5Z" fill="#fff" stroke="#c6c6c6"/><path d="M2.5 3.5H6.5" stroke="#b8b8b8"/></svg>
<svg style="left:417px;top:466px" width="9" height="11" viewBox="0 0 9 11"><path d="M0.5 0.5H8.5V6.5L4.5 10.5L0.5 6.5Z" fill="#fff" stroke="#c6c6c6"/><path d="M2.5 3.5H6.5" stroke="#b8b8b8"/></svg>
<svg style="left:417px;top:576px" width="9" height="11" viewBox="0 0 9 11"><path d="M0.5 0.5H8.5V6.5L4.5 10.5L0.5 6.5Z" fill="#fff" stroke="#c6c6c6"/><path d="M2.5 3.5H6.5" stroke="#b8b8b8"/></svg>
<svg style="left:417px;top:133px" width="9" height="11" viewBox="0 0 9 11"><path d="M0.5 10.5H8.5V4.5L4.5 0.5L0.5 4.5Z" fill="#fff" stroke="#c6c6c6"/><path d="M2.5 7.5H6.5" stroke="#b8b8b8"/></svg>
<svg style="left:417px;top:353px" width="9" height="11" viewBox="0 0 9 11"><path d="M0.5 10.5H8.5V4.5L4.5 0.5L0.5 4.5Z" fill="#fff" stroke="#c6c6c6"/><path d="M2.5 7.5H6.5" stroke="#b8b8b8"/></svg>
<svg style="left:417px;top:397px" width="9" height="11" viewBox="0 0 9 11"><path d="M0.5 10.5H8.5V4.5L4.5 0.5L0.5 4.5Z" fill="#fff" stroke="#c6c6c6"/><path d="M2.5 7.5H6.5" stroke="#b8b8b8"/></svg>
<svg style="left:417px;top:419px" width="9" height="11" viewBox="0 0 9 11"><path d="M0.5 10.5H8.5V4.5L4.5 0.5L0.5 4.5Z" fill="#fff" stroke="#c6c6c6"/><path d="M2.5 7.5H6.5" stroke="#b8b8b8"/></svg>
<svg style="left:417px;top:529px" width="9" height="11" viewBox="0 0 9 11"><path d="M0.5 10.5H8.5V4.5L4.5 0.5L0.5 4.5Z" fill="#fff" stroke="#c6c6c6"/><path d="M2.5 7.5H6.5" stroke="#b8b8b8"/></svg>
<div class="hl" style="left:363px;top:637px;width:640px;background:#d6d6d6"></div>
<div class="a" style="left:20px;top:661px;width:983px;height:28px;background:#f2f2f2"></div>
<div class="hl" style="left:20px;top:661px;width:983px;background:#d1d1d1"></div>
<div class="hl" style="left:20px;top:688px;width:983px;background:#d1d1d1"></div>
<div class="t" style="left:26.50px;top:668px;transform:scaleX(0.9842);transform-origin:0 0;">Debug:</div>
<svg style="left:88px;top:667px" width="17" height="17" viewBox="0 0 17 17"><path d="M7 0.5L11 6.5H3Z" fill="#a9a9a9"/><circle cx="3" cy="11.5" r="3" fill="#a9a9a9"/><rect x="8" y="8.5" width="6" height="6" fill="#f6dfa6"/><circle cx="13.2" cy="13.6" r="2.4" fill="#6ad86a"/></svg>
<div class="t" style="left:107.60px;top:668px;transform:scaleX(0.9667);transform-origin:0 0;">entry</div>
<svg style="left:143px;top:671px" width="8" height="8" viewBox="0 0 8 8"><path d="M0.5 0.5L7.5 7.5M7.5 0.5L0.5 7.5" stroke="#b3b3b3" stroke-width="1.1"/></svg>
<svg style="left:175px;top:667px" width="17" height="17" viewBox="0 0 17 17"><path d="M7 0.5L11 6.5H3Z" fill="#a9a9a9"/><circle cx="3" cy="11.5" r="3" fill="#a9a9a9"/><rect x="8" y="8.5" width="6" height="6" fill="#f6dfa6"/><circle cx="13.2" cy="13.6" r="2.4" fill="#6ad86a"/></svg>
<div class="t" style="left:194.50px;top:668px;transform:scaleX(0.9849);transform-origin:0 0;">entry(PandaDebugger21869)</div>
<svg style="left:368px;top:671px" width="8" height="8" viewBox="0 0 8 8"><path d="M0.5 0.5L7.5 7.5M7.5 0.5L0.5 7.5" stroke="#b3b3b3" stroke-width="1.1"/></svg>
<div class="a" style="left:382px;top:661px;width:235px;height:32px;border:2px solid #4049cd"></div>
<div class="a" style="left:387px;top:686px;width:225px;height:3px;border-radius:2px;background:#a6b0bf"></div>
<svg style="left:400px;top:667px" width="17" height="17" viewBox="0 0 17 17"><path d="M7 0.5L11 6.5H3Z" fill="#6e6e6e"/><circle cx="3" cy="11.5" r="3" fill="#6e6e6e"/><rect x="8" y="8.5" width="6" height="6" fill="#f4c84a"/><circle cx="13.2" cy="13.6" r="2.4" fill="#2ecc40"/></svg>
<div class="t" style="left:419.80px;top:668px;transform:scaleX(0.9813);transform-origin:0 0;">entry(PandaDebugger22606)</div>
<svg style="left:593px;top:672px" width="8" height="8" viewBox="0 0 8 8"><path d="M0.5 0.5L7.5 7.5M7.5 0.5L0.5 7.5" stroke="#b3b3b3" stroke-width="1.1"/></svg>
<div class="vl" style="left:48px;top:689px;height:167px;background:#d1d1d1"></div>
<div class="hl" style="left:48px;top:717px;width:955px;background:#d1d1d1"></div>
<div class="vl" style="left:77px;top:718px;height:138px;background:#d1d1d1"></div>
<div class="a" style="left:78px;top:718px;width:925px;height:138px;background:#fff"></div>
<div class="t" style="left:62.40px;top:697px;transform:scaleX(0.9556);transform-origin:0 0;font-size:12.3px">Debugger</div>
<div class="t" style="left:138.80px;top:697px;transform:scaleX(0.9326);transform-origin:0 0;font-size:12.3px">Console</div>
<div class="a" style="left:126px;top:715px;width:68px;height:2px;background:#8c9db5"></div>
<svg style="left:200px;top:697px" width="12" height="12" viewBox="0 0 12 12"><path d="M0 1.5H12M0 6H12M0 10.5H12" stroke="#b5b5b5" stroke-width="1.8"/></svg>
<div class="vl" style="left:222px;top:693px;height:19px;background:#d1d1d1"></div>
<svg style="left:232px;top:697px" width="14" height="12" viewBox="0 0 14 12"><path d="M1 11H13" stroke="#b5b5b5" stroke-width="1.8"/><path d="M0.6 5.6L5.8 0.7L10.3 4.9" fill="none" stroke="#b5b5b5" stroke-width="1.7"/><path d="M12.7 1.9V7.7H7.1Z" fill="#b5b5b5"/></svg>
<svg style="left:259px;top:697px" width="12" height="12" viewBox="0 0 12 12"><path d="M0 11H12M6 0V6" stroke="#b5b5b5" stroke-width="1.8"/><path d="M2 5H10L6 9Z" fill="#b5b5b5"/></svg>
<svg style="left:285px;top:697px" width="13" height="12" viewBox="0 0 13 12"><path d="M0 11H13M3 0V5M10 0V5" stroke="#b5b5b5" stroke-width="1.8"/><path d="M0 4.5H6L3 8Z M7 4.5H13L10 8Z" fill="#b5b5b5"/></svg>
<svg style="left:311px;top:697px" width="12" height="12" viewBox="0 0 12 12"><path d="M0 11H12M6 3.5V9" stroke="#b5b5b5" stroke-width="1.8"/><path d="M2 4.5H10L6 0.5Z" fill="#b5b5b5"/></svg>
<svg style="left:336px;top:697px" width="15" height="14" viewBox="0 0 15 14"><path d="M1.4 0.6L6 5.2" stroke="#b5b5b5" stroke-width="1.9"/><path d="M7.8 1V6.8H2Z" fill="#b5b5b5"/><path d="M11.4 5.8V12.4M9.4 5.5H13.4M9.4 12.6H13.4" stroke="#b5b5b5" stroke-width="1"/></svg>
<div class="vl" style="left:359px;top:693px;height:19px;background:#d1d1d1"></div>
<svg style="left:370px;top:697px" width="12" height="12" viewBox="0 0 12 12"><rect x="0" y="0" width="12" height="12" fill="#b5b5b5"/><rect x="2" y="2" width="8" height="1.8" fill="#f2f2f2"/><rect x="2" y="5" width="2" height="2" fill="#f2f2f2"/><rect x="5" y="5" width="2" height="2" fill="#f2f2f2"/><rect x="8" y="5" width="2" height="2" fill="#f2f2f2"/><rect x="2" y="8" width="2" height="2" fill="#f2f2f2"/><rect x="5" y="8" width="2" height="2" fill="#f2f2f2"/><rect x="8" y="8" width="2" height="2" fill="#f2f2f2"/></svg>
<svg style="left:29px;top:697px" width="12" height="11" viewBox="0 0 12 11"><rect x="0" y="0" width="2.5" height="11" fill="#b5b5b5"/><path d="M4 0L12 5.5L4 11Z" fill="#b5b5b5"/></svg>
<svg style="left:30px;top:723px" width="8" height="11" viewBox="0 0 8 11"><rect x="0" y="0" width="2.8" height="11" fill="#6e6e6e"/><rect x="5.2" y="0" width="2.8" height="11" fill="#6e6e6e"/></svg>
<div class="a" style="left:29px;top:750px;width:10px;height:10px;background:#db5860"></div>
<div class="hl" style="left:24px;top:771px;width:20px;background:#d5d5d5"></div>
<svg style="left:28px;top:781px" width="13" height="13" viewBox="0 0 13 13"><circle cx="8.8" cy="4.2" r="4.2" fill="#db5860"/><circle cx="4.5" cy="8.4" r="5.2" fill="#f2f2f2"/><circle cx="4.5" cy="8.4" r="4.5" fill="#db5860"/></svg>
<svg style="left:28px;top:808px" width="13" height="13" viewBox="0 0 13 13"><circle cx="6.2" cy="6.2" r="5.1" fill="#db5860"/><path d="M0.6 11.8L11.8 0.6" stroke="#f2f2f2" stroke-width="3.2"/><path d="M0.6 11.8L11.8 0.6" stroke="#6e6e6e" stroke-width="1.4"/></svg>
<div class="hl" style="left:24px;top:830px;width:20px;background:#d5d5d5"></div>
<svg style="left:27px;top:840px" width="13" height="13" viewBox="0 0 13 13"><path d="M5.65 0.06L7.35 0.06L8.39 1.94L9.51 2.58L11.66 2.54L12.51 4.01L11.40 5.86L11.40 7.14L12.51 8.99L11.66 10.46L9.51 10.42L8.39 11.06L7.35 12.94L5.65 12.94L4.61 11.06L3.49 10.42L1.34 10.46L0.49 8.99L1.60 7.14L1.60 5.86L0.49 4.01L1.34 2.54L3.49 2.58L4.61 1.94Z" fill="#6e6e6e"/><circle cx="6.5" cy="6.5" r="2.15" fill="#f2f2f2"/></svg>
<svg style="left:37px;top:852px" width="6" height="3" viewBox="0 0 6 3"><path d="M0 0H6L3 3Z" fill="#333"/></svg>
<svg style="left:58px;top:727px" width="10" height="12" viewBox="0 0 10 12"><path d="M5 1.5V12" stroke="#b5b5b5" stroke-width="1.6"/><path d="M0.8 5.5L5 1.2L9.2 5.5" fill="none" stroke="#b5b5b5" stroke-width="1.6"/></svg>
<svg style="left:58px;top:754px" width="10" height="12" viewBox="0 0 10 12"><path d="M5 0V10.5" stroke="#b5b5b5" stroke-width="1.6"/><path d="M0.8 6.5L5 10.8L9.2 6.5" fill="none" stroke="#b5b5b5" stroke-width="1.6"/></svg>
<svg style="left:57px;top:779px" width="13" height="14" viewBox="0 0 13 14"><path d="M0 1H13M0 6H11Q12.5 6 12.5 8.5Q12.5 11 10 11H6" fill="none" stroke="#6e6e6e" stroke-width="1.6"/><path d="M0 11H2.5" stroke="#6e6e6e" stroke-width="1.6"/><path d="M7.5 8L4.5 11L7.5 14Z" fill="#6e6e6e"/></svg>
<div class="a" style="left:52px;top:800px;width:22px;height:22px;border-radius:3px;background:#d6d6d6"></div>
<svg style="left:57px;top:805px" width="13" height="11" viewBox="0 0 13 11"><path d="M0 1H5M0 5H5M0 10H13" stroke="#6e6e6e" stroke-width="1.6"/><path d="M9 0V6" stroke="#6e6e6e" stroke-width="1.6"/><path d="M6 5H12L9 8.5Z" fill="#6e6e6e"/></svg>
<svg style="left:56px;top:830px" width="14" height="14" viewBox="0 0 14 14"><rect x="3.2" y="1.1" width="7.8" height="2.5" fill="#6e6e6e"/><rect x="0" y="5" width="14" height="5" fill="#6e6e6e"/><rect x="3.6" y="9.4" width="6.8" height="4" fill="#fff" stroke="#6e6e6e" stroke-width="1.3"/><circle cx="12.4" cy="6.4" r="0.7" fill="#fff"/></svg>
<div class="con" style="top:719px">Loaded and parsed script entry|entry|1.0.0|src/main/ets/entryability/NewUiAbility.ts</div>
<div class="con" style="top:741px">Loaded and parsed script entry|entry|1.0.0|src/main/ets/docability/DocAbility.ts</div>
<div class="con" style="top:763px">Loaded and parsed script entry|entry|1.0.0|src/main/ets/pages/DocPage.ts</div>
<div class="a" style="left:0;top:0;width:1004px;height:857px;border:1px solid #bdbdbd"></div>
</body></html>
